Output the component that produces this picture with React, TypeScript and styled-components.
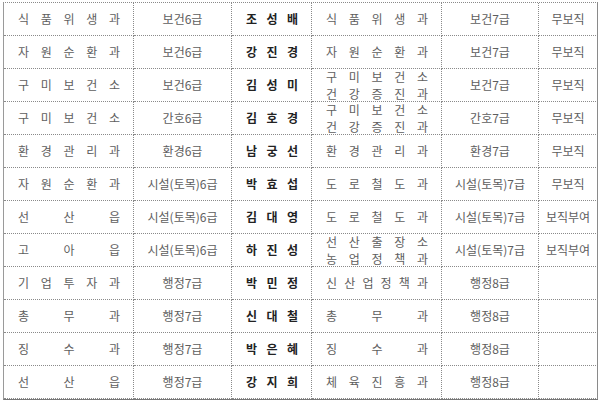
import styled, { createGlobalStyle } from 'styled-components'

const GlobalStyle = createGlobalStyle`
  html, body {
    margin: 0;
    padding: 0;
    background: #ffffff;
  }
  body {
    font-family: "Noto Sans CJK KR", "Noto Sans", sans-serif;
  }
`

type Row = [string[], string, string, string[], string, string]

const rows: Row[] = [
  [['식품위생과'], '보건6급', '조성배', ['식품위생과'], '보건7급', '무보직'],
  [['자원순환과'], '보건6급', '강진경', ['자원순환과'], '보건7급', '무보직'],
  [['구미보건소'], '보건6급', '김성미', ['구미보건소', '건강증진과'], '보건7급', '무보직'],
  [['구미보건소'], '간호6급', '김호경', ['구미보건소', '건강증진과'], '간호7급', '무보직'],
  [['환경관리과'], '환경6급', '남궁선', ['환경관리과'], '환경7급', '무보직'],
  [['자원순환과'], '시설(토목)6급', '박효섭', ['도로철도과'], '시설(토목)7급', '무보직'],
  [['선산읍'], '시설(토목)6급', '김대영', ['도로철도과'], '시설(토목)7급', '보직부여'],
  [['고아읍'], '시설(토목)6급', '하진성', ['선산출장소', '농업정책과'], '시설(토목)7급', '보직부여'],
  [['기업투자과'], '행정7급', '박민정', ['신산업정책과'], '행정8급', ''],
  [['총무과'], '행정7급', '신대철', ['총무과'], '행정8급', ''],
  [['징수과'], '행정7급', '박은혜', ['징수과'], '행정8급', ''],
  [['선산읍'], '행정7급', '강지희', ['체육진흥과'], '행정8급', ''],
]

const Page = styled.div`
  padding: 2px 0 0 3px;
`

const Table = styled.div`
  display: grid;
  grid-template-columns: 130px 98px 80px 130px 97px 59px;
  grid-auto-rows: 33px;
  width: 595px;
  border-left: 1px solid #9a9a9a;
  border-top: 1px dotted #8a8a8a;
  border-bottom: 1px solid #777;
  box-sizing: border-box;
`

const Cell = styled.div<{ $last?: boolean }>`
  box-sizing: border-box;
  border-right: 1px ${(p) => (p.$last ? 'solid #8a8a8a' : 'dotted #8a8a8a')};
  border-bottom: 1px dotted #8a8a8a;
  display: flex;
  flex-direction: column;
  justify-content: center;
  align-items: center;
  overflow: hidden;
  font-size: 12px;
  color: #5e5e5e;
`

const SpreadCell = styled(Cell)`
  align-items: stretch;
  padding: 0 13px 0 14px;
`

const SpreadLine = styled.div<{ $bold?: boolean }>`
  display: flex;
  justify-content: space-between;
  line-height: 16px;
  font-size: 12px;
  font-weight: ${(p) => (p.$bold ? 700 : 400)};
  color: ${(p) => (p.$bold ? '#222' : '#5e5e5e')};

  & + & {
    margin-top: 1px;
  }
`

const Grade = styled.span`
  line-height: 16px;
  white-space: nowrap;
`

const Spread = ({ text, bold }: { text: string; bold?: boolean }) => (
  <SpreadLine $bold={bold}>
    {Array.from(text).map((ch, i) => (
      <span key={i}>{ch}</span>
    ))}
  </SpreadLine>
)

export default function App() {
  return (
    <Page>
      <GlobalStyle />
      <Table>
        {rows.map(([from, grade, name, to, newGrade, note], r) => [
          <SpreadCell key={`${r}-a`}>
            {from.map((t) => (
              <Spread key={t} text={t} />
            ))}
          </SpreadCell>,
          <Cell key={`${r}-b`}>
            <Grade>{grade}</Grade>
          </Cell>,
          <SpreadCell key={`${r}-c`}>
            <Spread text={name} bold />
          </SpreadCell>,
          <SpreadCell key={`${r}-d`}>
            {to.map((t) => (
              <Spread key={t} text={t} />
            ))}
          </SpreadCell>,
          <Cell key={`${r}-e`}>
            <Grade>{newGrade}</Grade>
          </Cell>,
          <Cell key={`${r}-f`} $last>
            <Grade>{note}</Grade>
          </Cell>,
        ])}
      </Table>
    </Page>
  )
}
